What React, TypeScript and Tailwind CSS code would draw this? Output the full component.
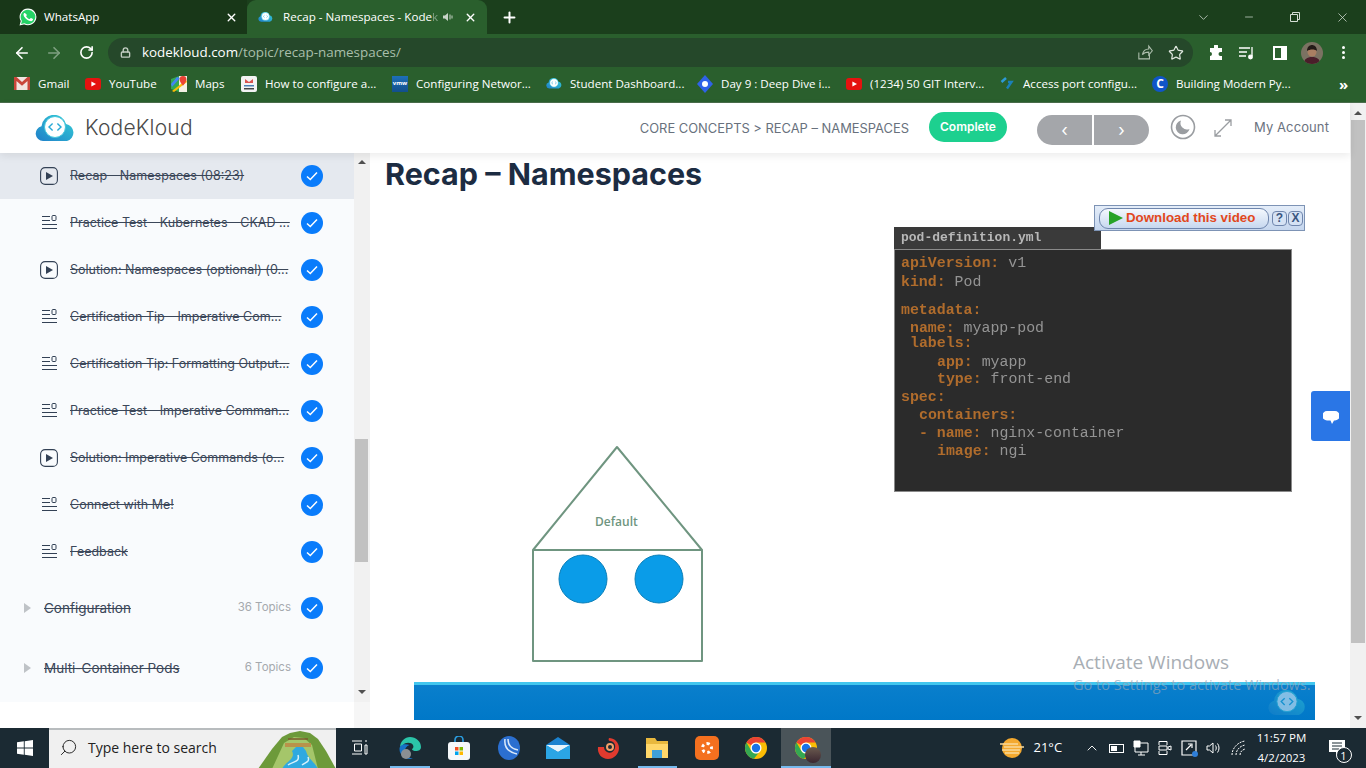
import { ArrowLeft, ArrowRight, RotateCw, Lock, Star, X, Plus, ChevronDown, Minus, Search, ChevronUp } from "lucide-react";

const ui = "font-['Open_Sans','Noto_Sans',sans-serif]";

function Chrome({ size = 24 }: { size?: number }) {
  return (
    <svg width={size} height={size} viewBox="0 0 24 24">
      <circle cx="12" cy="12" r="11" fill="#fbbc04" />
      <path d="M12 1a11 11 0 0 1 9.53 5.5H12a5.5 5.5 0 0 0-4.76 2.75L2.47 6.5A11 11 0 0 1 12 1z" fill="#ea4335" />
      <path d="M2.47 6.5l4.77 8.25a5.5 5.5 0 0 0 7.5 2.01L9.9 22.8A11 11 0 0 1 2.47 6.5z" fill="#34a853" />
      <circle cx="12" cy="12" r="5.5" fill="#fff" />
      <circle cx="12" cy="12" r="4.2" fill="#1a73e8" />
    </svg>
  );
}

function Cloud({ w = 40, h = 27, faded = false }: { w?: number; h?: number; faded?: boolean }) {
  return (
    <svg width={w} height={h} viewBox="0 0 40 27" className={faded ? "opacity-50" : ""}>
      <defs>
        <linearGradient id="kk" x1="0" x2="1" y1="1" y2="0">
          <stop offset="0" stopColor="#1f7fc9" />
          <stop offset="1" stopColor="#35cfd6" />
        </linearGradient>
      </defs>
      <path d="M8 26a7.5 7.5 0 0 1-1.5-14.8A12.5 12.5 0 0 1 31 9a8.7 8.7 0 0 1 1 17z" fill="url(#kk)" />
      <circle cx="20" cy="12" r="10.5" fill="#fff" stroke="#43c6dc" strokeWidth="1" />
      <path d="M17.6 8.5 14 12l3.6 3.5M22.4 8.5 26 12l-3.6 3.5" fill="none" stroke="#28a9d6" strokeWidth="1.4" />
    </svg>
  );
}

function WhatsAppIcon() {
  return (
    <svg width="18" height="18" viewBox="0 0 24 24">
      <path d="M12 1.5A10.4 10.4 0 0 0 3.1 17.3L1.7 22.4l5.3-1.4A10.4 10.4 0 1 0 12 1.5z" fill="#25d366" stroke="#fff" strokeWidth="1.4" />
      <path d="M8.6 6.9c-.5 0-1.4.8-1.4 2.3 0 1.6 1.1 3.1 1.3 3.3.2.2 2.2 3.5 5.4 4.7 2.6 1 3.2.8 3.8.7.6-.1 1.8-.7 2-1.4.2-.7.2-1.3.2-1.4l-2.6-1.4c-.3-.1-.5-.1-.7.2l-1 1.2c-.2.2-.4.2-.7.1-1.7-.7-3.2-2-4.1-3.6-.2-.3 0-.4.1-.6l.7-1c.1-.2.1-.4 0-.6L9.5 7.3c-.2-.4-.6-.4-.9-.4z" fill="#fff" transform="translate(-1.2 -.4)" />
    </svg>
  );
}

function YouTubeIcon() {
  return (
    <svg width="16" height="12" viewBox="0 0 16 12">
      <rect width="16" height="12" rx="3" fill="#e5120f" />
      <path d="M6.4 3.4 11 6l-4.6 2.6z" fill="#fff" />
    </svg>
  );
}

const bookmarks = [
  {
    w: "w-[71px]",
    label: "Gmail",
    icon: (
      <svg width="16" height="13" viewBox="0 0 16 13">
        <rect width="16" height="13" fill="#f2e4e0" />
        <path d="M0 0h2.5L8 5l5.500-5H16v13h-2.500V4L8 8.800 2.500 4v9H0z" fill="#c9463a" />
      </svg>
    ),
  },
  { w: "w-[86px]", label: "YouTube", icon: <YouTubeIcon /> },
  {
    w: "w-[70px]",
    label: "Maps",
    icon: (
      <svg width="16" height="16" viewBox="0 0 16 16">
        <path d="M0 3 8 0v16L0 13z" fill="#34a853" />
        <path d="M8 0h8v16H8z" fill="#f4f0e4" />
        <path d="M1 15 15 4l1 2L3 16z" fill="#fbbc04" />
        <path d="M0 8 6 1l3 1L1 11z" fill="#4285f4" />
        <path d="M12 0a3.400 3.400 0 0 0-3.400 3.400C8.600 6 12 9.500 12 9.500s3.400-3.500 3.400-6.100A3.400 3.400 0 0 0 12 0z" fill="#ea4335" />
      </svg>
    ),
  },
  {
    w: "w-[151px]",
    label: "How to configure a...",
    icon: (
      <svg width="16" height="16" viewBox="0 0 16 16">
        <rect width="16" height="16" rx="2" fill="#f3f3f3" />
        <path d="M4 3l4 3 4-3v4H4z" fill="#d9534f" />
        <path d="M3 9h10v1.500H3z" fill="#4a7fb5" />
        <path d="M3 12h10v1.500H3z" fill="#444" />
      </svg>
    ),
  },
  {
    w: "w-[154px]",
    label: "Configuring Networ...",
    icon: (
      <span className="flex h-[16px] w-[16px] items-center justify-center bg-gradient-to-b from-[#1d6fb8] to-[#124f8c] text-[6px] font-bold text-white">
        vmw
      </span>
    ),
  },
  { w: "w-[151px]", label: "Student Dashboard...", icon: <Cloud w={16} h={11} /> },
  {
    w: "w-[149px]",
    label: "Day 9 : Deep Dive i...",
    icon: (
      <svg width="16" height="18" viewBox="0 0 16 18">
        <path d="M8 0 16 9 8 18 0 9z" fill="#2f62e8" />
        <circle cx="8" cy="9" r="3" fill="#fff" />
      </svg>
    ),
  },
  { w: "w-[153px]", label: "(1234) 50 GIT Interv...", icon: <YouTubeIcon /> },
  {
    w: "w-[153px]",
    label: "Access port configu...",
    icon: (
      <svg width="16" height="16" viewBox="0 0 16 16" fill="none" strokeWidth="2.400">
        <path d="M7 2 2.500 6" stroke="#2d9bd8" />
        <path d="M9 6h3.500L8 12.500" stroke="#1b80b8" />
      </svg>
    ),
  },
  {
    w: "w-[170px]",
    label: "Building Modern Py...",
    icon: (
      <span className="flex h-[16px] w-[16px] items-center justify-center rounded-full bg-[#0f55c8] text-[12px] font-bold text-white">
        C
      </span>
    ),
  },
];

function Tabs() {
  return (
    <div className="flex h-[34px] shrink-0 bg-[#1b3f1c] text-[11.6px] text-white">
      <div className="flex w-[247px] items-center bg-[#183718] pl-[19px] pr-[8px]">
        <WhatsAppIcon />
        <span className="ml-[7px] flex-1">WhatsApp</span>
        <X size={13} strokeWidth={2.600} className="mr-[1px]" />
      </div>
      <div className="flex w-[240px] items-center rounded-t-[9px] bg-[#2a5f2d] pl-[11px] pr-[10px]">
        <Cloud w={15} h={10} />
        <span className="ml-[10px] w-[155px] whitespace-nowrap">
          Recap - Namespaces - Kode<span className="opacity-40">k</span>
        </span>
        <svg width="12" height="12" viewBox="0 0 12 12" className="ml-[4px]" fill="#c8d4c8">
          <path d="M1 4.500h2L6 2v8L3 7.500H1z" />
          <path d="M8 3.500v5M10 4.500v3" stroke="#c8d4c8" fill="none" />
        </svg>
        <X size={13} strokeWidth={2.600} className="ml-[10px]" />
      </div>
      <div className="flex w-[44px] items-center justify-center">
        <Plus size={17} strokeWidth={2.800} />
      </div>
      <div className="ml-auto flex items-center pr-[16px] text-[#d5dfd5]">
        <ChevronDown size={15} strokeWidth={1.200} className="mr-[32px]" />
        <Minus size={12} strokeWidth={1.400} className="mr-[34px]" />
        <svg width="12" height="12" viewBox="0 0 12 12" fill="none" stroke="currentColor" className="mr-[34px]">
          <path d="M1.500 3.500h7v7h-7zM3.500 3.500v-2h7v7h-2" />
        </svg>
        <X size={15} strokeWidth={1.200} />
      </div>
    </div>
  );
}

function Toolbar() {
  return (
    <div className="flex h-[34px] shrink-0 items-center bg-[#2a5f2d] pt-[3px] text-white">
      <div className="flex w-[108px] items-center pl-[13px]">
        <ArrowLeft size={18} strokeWidth={2.200} />
        <ArrowRight size={18} strokeWidth={2.200} className="ml-[14px] text-[#7fa081]" />
        <RotateCw size={15} strokeWidth={2.600} className="ml-[16px]" />
      </div>
      <div className="flex h-[29px] w-[1085px] items-center rounded-full bg-[#25482a] pl-[12px] pr-[9px] text-[13.4px]">
        <Lock size={11} strokeWidth={3} className="text-[#c2cdc2]" />
        <span className="ml-[11px]">kodekloud.com</span>
        <span className="text-[#a9bfaa]">/topic/recap-namespaces/</span>
        <svg width="17" height="17" viewBox="0 0 24 24" fill="none" stroke="#aebfae" strokeWidth="1.500" className="ml-auto">
          <path d="M4 12v9h15v-6M9 15c1-5 5-8 9-8V3l5 6.500-5 6V11.500c-4 0-7 1-9 3.500z" />
        </svg>
        <Star size={16} strokeWidth={1.800} className="ml-[15px] text-[#dfe7df]" />
      </div>
      <div className="flex flex-1 items-center pl-[15px]">
        <svg width="16" height="16" viewBox="0 0 16 16" fill="#fff">
          <path d="M6 1a2 2 0 0 1 4 0v2h4v4h-1.500a2 2 0 0 0 0 4H14v4H2v-4a2 2 0 0 0 0-4V3h4z" />
        </svg>
        <svg width="16" height="14" viewBox="0 0 16 14" fill="none" stroke="#fff" strokeWidth="1.300" className="ml-[15px]">
          <path d="M0 2h11M0 6h8M0 10h7M13 1v9" />
          <circle cx="11.500" cy="11" r="1.800" fill="#fff" />
        </svg>
        <span className="ml-[18px] h-[14px] w-[14px] border-2 border-white border-r-[6px]" />
        <svg width="22" height="22" viewBox="0 0 22 22" className="ml-[14px]">
          <clipPath id="av">
            <circle cx="11" cy="11" r="11" />
          </clipPath>
          <g clipPath="url(#av)">
            <rect width="22" height="22" fill="#7b7262" />
            <path d="M3 22c0-5 3-7 8-7s8 2 8 7z" fill="#4a1e2a" />
            <circle cx="11" cy="10" r="4.500" fill="#a97f62" />
            <path d="M6 9c0-4 2.500-6 5-6s5 2 5 6c-2-2-7-2-10 0z" fill="#241a17" />
          </g>
        </svg>
        <span className="ml-[19px] flex flex-col gap-[2px]">
          <span className="h-[3px] w-[3px] rounded-full bg-white" />
          <span className="h-[3px] w-[3px] rounded-full bg-white" />
          <span className="h-[3px] w-[3px] rounded-full bg-white" />
        </span>
      </div>
    </div>
  );
}

function Bookmarks() {
  return (
    <div className="flex h-[35px] shrink-0 items-center border-b border-[#4a6d4c] bg-[#2a5f2d] pb-[2px] pl-[14px] text-[11.6px] text-white">
      {bookmarks.map((b) => (
        <div key={b.label} className={`flex items-center whitespace-nowrap ${b.w}`}>
          <span className="flex w-[16px] shrink-0 items-center justify-center">{b.icon}</span>
          <span className="ml-[8px]">{b.label}</span>
        </div>
      ))}
      <span className="ml-[17px] text-[15px] font-bold leading-none">»</span>
    </div>
  );
}

function SiteHeader() {
  return (
    <header className="relative z-10 flex h-[50px] shrink-0 items-center bg-white pl-[35px] pr-[21px] font-['Inter',sans-serif] shadow-[0_3px_8px_rgba(0,0,0,0.08)]">
      <Cloud />
      <span className="ml-[10px] text-[21px] font-light tracking-[0.2px] text-[#4a4a4a]">KodeKloud</span>
      <span className="ml-auto translate-y-[1px] text-[12.9px] text-[#68717d]">CORE CONCEPTS &gt; RECAP – NAMESPACES</span>
      <button className="ml-[20px] h-[30px] w-[78px] -translate-y-[1px] rounded-full bg-[#1dd08f] text-[12px] font-semibold text-white">
        Complete
      </button>
      <div className="ml-[30px] flex h-[30px] w-[112px] translate-y-[2px] gap-[2px] overflow-hidden rounded-full text-white">
        <span className="flex flex-1 items-center justify-center bg-[#a4a6aa] text-[17px] leading-none">‹</span>
        <span className="flex flex-1 items-center justify-center bg-[#a4a6aa] text-[17px] leading-none">›</span>
      </div>
      <svg width="26" height="26" viewBox="0 0 26 26" className="ml-[21px] -translate-y-[1px]">
        <circle cx="13" cy="13" r="11.500" fill="none" stroke="#9a9da1" strokeWidth="1.600" />
        <path d="M11 6.500a7 7 0 1 0 8.500 8.500 6.500 6.500 0 0 1-8.500-8.500z" fill="#9a9da1" />
      </svg>
      <svg width="18" height="18" viewBox="0 0 18 18" fill="none" stroke="#9a9da1" strokeWidth="1.300" className="ml-[18px]">
        <path d="M1 17 17 1M11 1h6v6M1 11v6h6" />
      </svg>
      <span className="ml-[22px] text-[13px] tracking-[0.1px] text-[#6b7280]">My Account</span>
    </header>
  );
}

function VideoIcon() {
  return (
    <svg width="18" height="18" viewBox="0 0 18 18">
      <rect x="0.600" y="0.600" width="16.800" height="16.800" rx="4.500" fill="none" stroke="#334155" strokeWidth="1.100" />
      <path d="M6 5l7 4-7 4z" fill="#334155" />
    </svg>
  );
}

function TextIcon() {
  return (
    <svg width="16" height="15" viewBox="0 0 16 15" fill="none" stroke="#334155" strokeWidth="1">
      <path d="M1 1.500h8M1 5.500h8M1 9.500h15M1 13.500h15" />
      <rect x="11" y="0.500" width="4" height="5" rx="1" />
    </svg>
  );
}

function Check() {
  return (
    <span className="flex h-[22px] w-[22px] shrink-0 items-center justify-center rounded-full bg-[#0a7cfb]">
      <svg width="12" height="10" viewBox="0 0 12 10" fill="none" stroke="#fff" strokeWidth="1.500">
        <path d="M1 5.500 4.300 8.500 11 1.500" />
      </svg>
    </span>
  );
}

const lessons = [
  { t: "Recap - Namespaces (08:23)", v: true, on: true },
  { t: "Practice Test - Kubernetes - CKAD ..." },
  { t: "Solution: Namespaces (optional) (0...", v: true },
  { t: "Certification Tip - Imperative Com..." },
  { t: "Certification Tip: Formatting Output..." },
  { t: "Practice Test - Imperative Comman..." },
  { t: "Solution: Imperative Commands (o...", v: true },
  { t: "Connect with Me!" },
  { t: "Feedback" },
];

function Sidebar() {
  return (
    <div className="flex w-[370px] shrink-0 font-['Inter',sans-serif]">
      <div className="flex h-[549px] w-[354px] flex-col bg-[#f9fbfd] text-[#3b4759]">
        {lessons.map((l) => (
          <div
            key={l.t}
            className={`flex shrink-0 items-center pl-[40px] pr-[31px] ${l.on ? "h-[46px] bg-[#e5e9ef]" : "h-[47px]"}`}
          >
            <span className="flex w-[18px] justify-center">{l.v ? <VideoIcon /> : <TextIcon />}</span>
            <span className={`ml-[12px] flex-1 truncate text-[12.5px] line-through ${l.on ? "" : "pt-[2px]"}`}>{l.t}</span>
            <Check />
          </div>
        ))}
        <div className="mt-[3px] flex h-[60px] shrink-0 items-center pl-[24px] pr-[31px]">
          <span className="h-0 w-0 border-y-[5px] border-l-[7px] border-y-transparent border-l-[#bfc3c7]" />
          <span className="ml-[13px] flex-1 text-[13.500px] line-through">Configuration</span>
          <span className="mr-[10px] text-[11.5px] text-[#a5a9ae]">36 Topics</span>
          <Check />
        </div>
        <div className="flex h-[60px] shrink-0 items-center pl-[24px] pr-[31px]">
          <span className="h-0 w-0 border-y-[5px] border-l-[7px] border-y-transparent border-l-[#bfc3c7]" />
          <span className="ml-[13px] flex-1 text-[13.500px] line-through">Multi-Container Pods</span>
          <span className="mr-[10px] text-[11.5px] text-[#a5a9ae]">6 Topics</span>
          <Check />
        </div>
      </div>
      <div className="flex h-full w-[16px] flex-col bg-[#f6f6f6]">
        <div className="flex h-[549px] flex-col items-center bg-[#f1f1f1] pt-[7px]">
          <span className="h-0 w-0 border-x-[4px] border-b-[4px] border-x-transparent border-b-[#505050]" />
          <span className="ml-[-1px] mt-[275px] h-[123px] w-[13px] bg-[#c1c1c1]" />
          <span className="mt-[128px] h-0 w-0 border-x-[4px] border-t-[4px] border-x-transparent border-t-[#505050]" />
        </div>
      </div>
    </div>
  );
}

const yaml = [
  { c: "pl-0", k: "apiVersion:", v: " v1" },
  { c: "pl-0 mt-[1px]", k: "kind:", v: " Pod" },
  { c: "pl-0 mt-[10px]", k: "metadata:", v: "" },
  { c: "pl-[9px]", k: "name:", v: " myapp-pod" },
  { c: "pl-[9px] -mt-[3px]", k: "labels:", v: "" },
  { c: "pl-[36px] mt-[1px]", k: "app:", v: " myapp" },
  { c: "pl-[36px] -mt-[1px]", k: "type:", v: " front-end" },
  { c: "pl-0", k: "spec:", v: "" },
  { c: "pl-[18px]", k: "containers:", v: "" },
  { c: "pl-[18px]", k: "- name:", v: " nginx-container" },
  { c: "pl-[36px]", k: "image:", v: " ngi" },
];

function YamlPanel() {
  return (
    <div className="absolute left-[480px] top-[27px] w-[398px] font-['Liberation_Mono',monospace]">
      <div className="flex h-[22px] w-[207px] items-center bg-[#3a3a3a] pl-[7px] text-[13px] font-bold text-[#b8b8b8] blur-[0.4px]">
        pod-definition.yml
      </div>
      <div className="h-[243px] border border-[#8a8a8a] bg-[#2b2b2b] pl-[6px] pt-[4px] text-[14.900px] leading-[18px] blur-[0.4px]">
        {yaml.map((y) => (
          <div key={y.c + y.k} className={`whitespace-pre ${y.c}`}>
            <span className="font-bold text-[#b06c2c]">{y.k}</span>
            <span className="text-[#949494]">{y.v}</span>
          </div>
        ))}
      </div>
    </div>
  );
}

function Slide() {
  return (
    <div className="relative ml-[44px] mt-[8px] flex h-[520px] w-[901px] flex-col justify-end">
      <svg width="174" height="219" viewBox="0 0 174 219" className="absolute left-[116px] top-[245px]">
        <path d="M3 105 87 2l85 103zM3 105h169v111H3z" fill="#fff" stroke="#6f9580" strokeWidth="2" strokeLinejoin="round" />
        <circle cx="53" cy="134" r="24" fill="#0a9ce8" stroke="#0b7fb8" strokeWidth="1" />
        <circle cx="129" cy="134" r="24" fill="#0a9ce8" stroke="#0b7fb8" strokeWidth="1" />
      </svg>
      <span className="absolute left-[181px] top-[313px] font-['Open_Sans',sans-serif] text-[12px] font-semibold text-[#6f9580]">
        Default
      </span>
      <YamlPanel />
      <div className="h-[38px] border-t-[3px] border-[#42c6ee] bg-gradient-to-b from-[#0a7fcc] to-[#0078c8]" />
      <span className="absolute bottom-[4px] right-[7px]">
        <Cloud w={42} h={26} faded />
      </span>
    </div>
  );
}

function DownloadBar() {
  return (
    <div className="absolute left-[1094px] top-[52px] flex h-[26px] w-[211px] items-center border border-[#7d93b5] bg-gradient-to-b from-[#e4edf9] to-[#c5d6ee] pl-[4px] font-['Liberation_Sans',sans-serif]">
      <div className="flex h-[21px] w-[170px] items-center rounded-[9px] border border-[#6f86ad] bg-gradient-to-b from-[#f4f8fd] to-[#c7d8ef] pl-[9px]">
        <span className="h-0 w-0 border-y-[7px] border-l-[14px] border-y-transparent border-l-[#27a327]" />
        <span className="ml-[3px] text-[13.3px] font-bold text-[#e2481c]">Download this video</span>
      </div>
      <span className="ml-[3px] flex h-[15px] w-[15px] items-center justify-center rounded-[4px] border border-[#6f86ad] bg-[#d5e2f4] text-[12px] font-bold text-[#3a5680]">
        ?
      </span>
      <span className="ml-[1px] flex h-[15px] w-[15px] items-center justify-center rounded-[4px] border border-[#6f86ad] bg-[#d5e2f4] text-[12px] font-bold text-[#3a5680]">
        X
      </span>
    </div>
  );
}

function PageBody() {
  return (
    <div className="relative flex min-h-0 flex-1">
      <Sidebar />
      <div className="flex-1 font-['Inter',sans-serif]">
        <h1 className="pl-[15px] pt-[3px] text-[30.500px] font-bold leading-[36px] text-[#1c2c42]">
          Recap – Namespaces
        </h1>
        <Slide />
      </div>
      <DownloadBar />
      <div className="absolute right-0 top-[238px] flex h-[50px] w-[39px] items-center justify-center rounded-l-[3px] bg-[#2a76e6]">
        <svg width="16" height="15" viewBox="0 0 16 15" fill="#fff" className="translate-y-[2px]">
          <path d="M4 0h8a4 4 0 0 1 0 9.500h-1L9 13 7.500 9.500H4A4 4 0 0 1 4 0z" />
        </svg>
      </div>
    </div>
  );
}

function PageScrollbar() {
  return (
    <div className="flex w-[16px] shrink-0 flex-col items-center bg-[#f1f1f1] pt-[8px]">
      <span className="h-0 w-0 border-x-[4px] border-b-[4px] border-x-transparent border-b-[#505050]" />
      <span className="mt-[5px] h-[523px] w-[14px] bg-[#c1c1c1]" />
      <span className="mt-[73px] h-0 w-0 border-x-[4px] border-t-[4px] border-x-transparent border-t-[#505050]" />
    </div>
  );
}

function SearchArt() {
  return (
    <svg width="78" height="40" viewBox="0 0 78 40">
      <path d="M0 40 14 20 24 8l8-4 10-2 10 2 8 6 8 12 10 18z" fill="#6d9a3a" />
      <path d="M14 40 26 14l10-6 10 1 8 7 6 24z" fill="#a5c66a" />
      <path d="M24 40c4-8 14-10 10-18l8-8 6 8c2 8 8 10 12 18z" fill="#2fa9e0" />
      <path d="M30 36c6-4 12-3 10-10M44 36c4-3 8-3 6-8" fill="none" stroke="#d6f1fb" strokeWidth="1.500" />
      <path d="M27 14h26v4H27z" fill="#b9924a" />
      <path d="M30 10h20" stroke="#7a5a2b" strokeWidth="1.500" />
    </svg>
  );
}

function TaskIcon({ children, active, open }: { children: React.ReactNode; active?: boolean; open?: boolean }) {
  return (
    <div className={`relative flex h-[40px] w-[49.500px] items-center justify-center ${active ? "bg-[#4a5459]" : ""}`}>
      {children}
      {(active || open) && <span className={`absolute bottom-0 h-[2px] bg-[#76b9ed] ${active ? "inset-x-0" : "inset-x-[5px]"}`} />}
    </div>
  );
}

function Taskbar() {
  return (
    <div className={`flex h-[40px] shrink-0 items-center bg-[#1b2a33] text-white ${ui}`}>
      <div className="flex w-[49px] items-center justify-center">
        <svg width="16" height="16" viewBox="0 0 16 16" fill="#fff">
          <path d="M0 2.300 6.800 1.300v6.200H0zM7.700 1.200 16 0v7.500H7.700zM0 8.400h6.800v6.300L0 13.700zM7.700 8.400H16V16l-8.300-1.200z" />
        </svg>
      </div>
      <div className="flex h-[40px] w-[287px] items-center overflow-hidden border-t-2 border-[#b8bcbe] bg-[#f0f0f0] pb-[3px] pl-[10px] text-[#222]">
        <Search size={19} strokeWidth={1.200} className="-scale-x-100" />
        <span className="ml-[10px] flex-1 text-[14px]">Type here to search</span>
        <span className="-mb-[3px] flex">
          <SearchArt />
        </span>
      </div>
      <div className="flex w-[49px] items-center justify-center pr-[2px]">
        <svg width="16" height="16" viewBox="0 0 16 16" fill="none" stroke="#fff" strokeWidth="1">
          <path d="M0 1h10M2.500 4h7v7h-7zM0 14h10M13 1h2M13 5h2v9h-2z" />
        </svg>
      </div>
      <div className="flex">
        <TaskIcon open>
          <svg width="24" height="24" viewBox="0 0 24 24">
            <path d="M2 12C2 5 7 1 12 1c6 0 11 4.500 11 10 0 3-2.500 4-5 4-2 0-4-.5-4-2 1-.5 2-2 1-4-1.500-3-8-3-10 0-1 1.500-3 1-3 3z" fill="#2bc4a8" />
            <path d="M1.500 13c0 6 5 10 10 10 2 0 3-.5 4-1-5 1-9-2-9-6 0-3 2-6 5-7-5-2-10 0-10 4z" fill="#1773c7" />
            <circle cx="8" cy="18" r="5" fill="#8b8f93" />
          </svg>
        </TaskIcon>
        <TaskIcon>
          <svg width="22" height="24" viewBox="0 0 22 24">
            <path d="M7 7V4a4 4 0 0 1 8 0v3" fill="none" stroke="#2a9de0" strokeWidth="1.600" />
            <rect x="0" y="6" width="22" height="18" rx="3" fill="#f6f8fa" />
            <path d="M7 11h3.500v3.500H7z" fill="#f25022" />
            <path d="M11.500 11H15v3.500h-3.500z" fill="#7fba00" />
            <path d="M7 15.500h3.500V19H7z" fill="#00a4ef" />
            <path d="M11.500 15.500H15V19h-3.500z" fill="#ffb900" />
          </svg>
        </TaskIcon>
        <TaskIcon>
          <svg width="22" height="24" viewBox="0 0 22 24">
            <ellipse cx="11" cy="12" rx="11" ry="12" fill="#2b6fd0" />
            <path d="M7 3c-1 8 2 13 12 15M10 3c0 6 3 10 10 11" fill="none" stroke="#dbe9fa" strokeWidth="1.500" />
          </svg>
        </TaskIcon>
        <TaskIcon>
          <svg width="24" height="22" viewBox="0 0 24 22">
            <path d="M0 8 12 0l12 8v14H0z" fill="#1b82cf" />
            <path d="M0 8h24L12 15z" fill="#e8f4fb" />
            <path d="M0 8l12 7 12-7v14H0z" fill="#2ba5e5" />
          </svg>
        </TaskIcon>
        <TaskIcon>
          <svg width="24" height="24" viewBox="0 0 24 24">
            <path d="M2 11c-1 7 4 12 10 12 6 0 11-5 11-11C23 6 18 2 13 2c-1 2 0 3 1 3 4 0 6 4 5 7-1 4-5 6-8 4-2-1-3-3-3-5z" fill="#e23a2e" />
            <circle cx="14" cy="11" r="3" fill="none" stroke="#f3a06a" strokeWidth="2" />
          </svg>
        </TaskIcon>
        <TaskIcon open>
          <svg width="24" height="22" viewBox="0 0 24 22">
            <path d="M1 1h9l2 3h11v17H1z" fill="#e8b83e" />
            <path d="M1 7h22v14H1z" fill="#ffd76a" />
            <path d="M7 13h10v8H7z" fill="#3f9fd8" />
          </svg>
        </TaskIcon>
        <TaskIcon>
          <span className="flex h-[24px] w-[24px] items-center justify-center rounded-[5px] bg-[#f4701f]">
            <span className="h-[12px] w-[12px] rounded-full border-[3px] border-dotted border-white" />
          </span>
        </TaskIcon>
        <TaskIcon>
          <Chrome />
        </TaskIcon>
        <TaskIcon active>
          <span className="relative flex">
            <Chrome />
            <span className="absolute -bottom-[3px] -right-[3px] h-[16px] w-[16px] rounded-full bg-gradient-to-b from-[#6b5b4f] to-[#3a2630]" />
          </span>
        </TaskIcon>
      </div>
      <div className="ml-[163px] flex w-[37px] justify-center">
        <svg width="24" height="24" viewBox="0 0 24 24">
          <circle cx="12" cy="12" r="10" fill="#f4a92f" />
          <path d="M0 8h18M4 11h20M2 14h18M5 17h14" stroke="#f9d99a" strokeWidth="1.300" />
        </svg>
      </div>
      <span className="ml-[3px] w-[50px] text-[13px]">21°C</span>
      <ChevronUp size={16} strokeWidth={1.400} />
      <div className="ml-[9px] flex items-center gap-[9px] text-white">
        <span className="flex h-[9px] w-[15px] items-center border border-white pl-[1px]">
          <span className="h-[5px] w-[6px] bg-white" />
        </span>
        <svg width="16" height="16" viewBox="0 0 16 16" fill="none" stroke="#fff">
          <path d="M2 3h13v9H2zM8 12v3M5 15h7" />
          <path d="M1 1h6v6H1z" fill="#fff" />
        </svg>
        <svg width="14" height="16" viewBox="0 0 14 16" fill="none" stroke="#fff">
          <path d="M1 5V1.500h8V5M1 11v3.500h8V11M1 6h8v4H1zM10 7l3-1v4l-3-1z" />
        </svg>
        <span className="relative flex">
          <svg width="16" height="16" viewBox="0 0 16 16" fill="none" stroke="#fff" strokeWidth="1.200">
            <path d="M1 1h14v14H1zM5 10l5-5M7 4h4v4" />
          </svg>
          <span className="absolute -bottom-[1px] -right-[1px] h-[6px] w-[6px] rounded-full bg-[#2f7fd8]" />
        </span>
        <svg width="16" height="16" viewBox="0 0 16 16" fill="none" stroke="#fff">
          <path d="M1 6h2.500L7 3v10L3.500 10H1zM9.500 5.500c1 1.500 1 3.500 0 5M11.500 3.500c2 2.500 2 6.500 0 9" />
        </svg>
        <svg width="16" height="16" viewBox="0 0 16 16" fill="none" stroke="#fff">
          <path d="M1 15C1 8 7 2 14 1M5 15c0-5 4-9 9-10M9 15c0-3 2-5 5-6" strokeDasharray="2 1" />
        </svg>
      </div>
      <div className="ml-[3px] flex w-[64px] flex-col items-center text-[11.500px] leading-[20px]">
        <span>11:57 PM</span>
        <span>4/2/2023</span>
      </div>
      <div className="relative ml-[15px] flex">
        <svg width="16" height="16" viewBox="0 0 16 16" fill="#fff">
          <path d="M0 0h16v12H9l-2 3v-3H0z" />
          <path d="M3 3h10M3 6h10M3 9h7" stroke="#1b2a33" />
        </svg>
        <span className="absolute -bottom-[7px] -right-[7px] flex h-[16px] w-[16px] items-center justify-center rounded-full border border-white bg-[#1b2a33] text-[11px] leading-none">
          1
        </span>
      </div>
    </div>
  );
}

export default function App() {
  return (
    <div className={`flex h-[768px] w-[1366px] flex-col overflow-hidden bg-white ${ui}`}>
      <Tabs />
      <Toolbar />
      <Bookmarks />
      <div className="relative flex min-h-0 flex-1">
        <div className="flex min-w-0 flex-1 flex-col">
          <SiteHeader />
          <PageBody />
        </div>
        <PageScrollbar />
        {/* Windows watermark sits over the page */}
        <div className="absolute left-[1073px] top-[546px] text-[#a8aeb4]">
          <div className="text-[19px] leading-[26px]">Activate Windows</div>
          <div className="text-[14.500px] leading-[20px] text-[#8fa5b8]/70">Go to Settings to activate Windows.</div>
        </div>
      </div>
      <Taskbar />
    </div>
  );
}
